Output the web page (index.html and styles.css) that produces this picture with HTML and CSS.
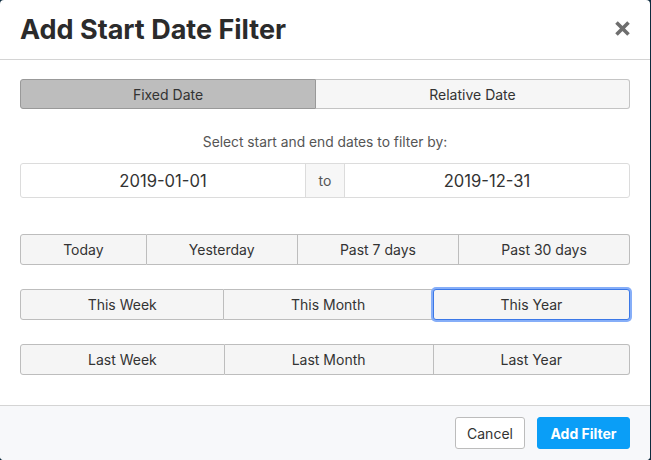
FILE: index.html
```html
<!DOCTYPE html>
<html>
<head>
<meta charset="utf-8">
<link rel="stylesheet" href="styles.css">
</head>
<body>
<div class="modal">
  <div class="modal-header">
    <h1 class="title">Add Start Date Filter</h1>
    <button class="close" aria-label="Close">
      <svg width="17" height="17" viewBox="0 0 17 17"><path d="M2.5 2.5 L14.5 14.5 M14.5 2.5 L2.5 14.5" stroke="#6e6e6e" stroke-width="3.6" fill="none"/></svg>
    </button>
  </div>
  <div class="modal-body">
    <div class="toggle">
      <button class="seg active">Fixed Date</button>
      <button class="seg">Relative Date</button>
    </div>
    <p class="hint">Select start and end dates to filter by:</p>
    <div class="date-group">
      <div class="date-input">2019-01-01</div>
      <div class="addon">to</div>
      <div class="date-input">2019-12-31</div>
    </div>
    <div class="btn-row">
      <button class="opt">Today</button>
      <button class="opt">Yesterday</button>
      <button class="opt">Past 7 days</button>
      <button class="opt">Past 30 days</button>
    </div>
    <div class="btn-row">
      <button class="opt">This Week</button>
      <button class="opt">This Month</button>
      <button class="opt focus">This Year</button>
    </div>
    <div class="btn-row">
      <button class="opt">Last Week</button>
      <button class="opt">Last Month</button>
      <button class="opt">Last Year</button>
    </div>
  </div>
  <div class="modal-footer">
    <button class="btn cancel">Cancel</button>
    <button class="btn primary">Add Filter</button>
  </div>
</div>
</body>
</html>
```
FILE: styles.css
```css
* { box-sizing: border-box; }
html, body { margin: 0; padding: 0; }
body {
  background: #0d2b3e;
  font-family: Inter, "Noto Sans", sans-serif;
  color: #333;
  width: 651px;
  height: 460px;
  overflow: hidden;
}
.modal {
  width: 650px;
  height: 460px;
  background: #fff;
  border-radius: 4px;
  display: flex;
  flex-direction: column;
  overflow: hidden;
}
.modal-header {
  height: 60px;
  border-bottom: 1px solid #d4d4d4;
  display: flex;
  align-items: center;
  justify-content: space-between;
  padding: 0 19px 0 20px;
}
.title {
  margin: 0;
  font-size: 27px;
  font-weight: 700;
  color: #2b2b2b;
  letter-spacing: 0;
  padding-bottom: 1px;
}
.close {
  border: 0;
  background: none;
  padding: 0;
  width: 17px;
  height: 17px;
  display: flex;
  margin-top: -2px;
}
.modal-body {
  flex: 1;
  padding: 19px 20px 0 20px;
}
button {
  font-family: inherit;
}
.toggle {
  display: flex;
  height: 30px;
}
.seg {
  flex: 1 1 0;
  font-size: 14px;
  color: #333;
  background: #f6f6f6;
  border: 1px solid #c4c4c4;
  padding: 0;
}
.seg:first-child {
  border-radius: 3px 0 0 3px;
  flex-basis: 296px;
  flex-grow: 0;
}
.seg:last-child {
  border-radius: 0 3px 3px 0;
  border-left: 0;
}
.seg.active {
  background: #bdbdbd;
  border-color: #999;
}
.hint {
  margin: 23px 0 11px;
  text-align: center;
  font-size: 13.8px;
  line-height: 20px;
  color: #555;
}
.date-group {
  display: flex;
  height: 35px;
  border: 1px solid #dcdcdc;
  border-radius: 3px;
}
.date-input {
  flex: 1;
  display: flex;
  align-items: center;
  justify-content: center;
  font-size: 16.6px;
  color: #333;
}
.addon {
  width: 40px;
  background: #f7f7f7;
  border-left: 1px solid #dcdcdc;
  border-right: 1px solid #dcdcdc;
  display: flex;
  align-items: center;
  justify-content: center;
  font-size: 14px;
  color: #555;
}
.btn-row {
  display: flex;
  height: 31px;
  margin-top: 24px;
}
.date-group + .btn-row { margin-top: 36px; }
.opt {
  flex: 1 1 auto;
  font-size: 14px;
  color: #333;
  background: #f5f5f5;
  border: 1px solid #bdbdbd;
  border-left-width: 0;
  padding: 0;
}
.opt:first-child {
  border-left-width: 1px;
  border-radius: 3px 0 0 3px;
}
.opt:last-child {
  border-radius: 0 3px 3px 0;
}
.opt.focus {
  border: 1px solid #3b78e7;
  box-shadow: 0 0 0 2px #86aef8;
  border-radius: 3px;
  position: relative;
}
.modal-footer {
  height: 55px;
  background: #f7f8fa;
  border-top: 1px solid #d4d4d4;
  display: flex;
  align-items: center;
  justify-content: flex-end;
  gap: 12px;
  padding: 0 20px 0 0;
}
.btn {
  height: 32px;
  font-size: 14px;
  border-radius: 3px;
  padding: 0 14px;
}
.cancel {
  background: #fff;
  border: 1px solid #bcbcbc;
  color: #333;
  width: 70px;
  padding: 0;
}
.primary {
  background: #0a9ef7;
  border: 1px solid #0a9ef7;
  color: #fff;
  font-weight: 700;
  width: 93px;
  padding: 0;
}
```
